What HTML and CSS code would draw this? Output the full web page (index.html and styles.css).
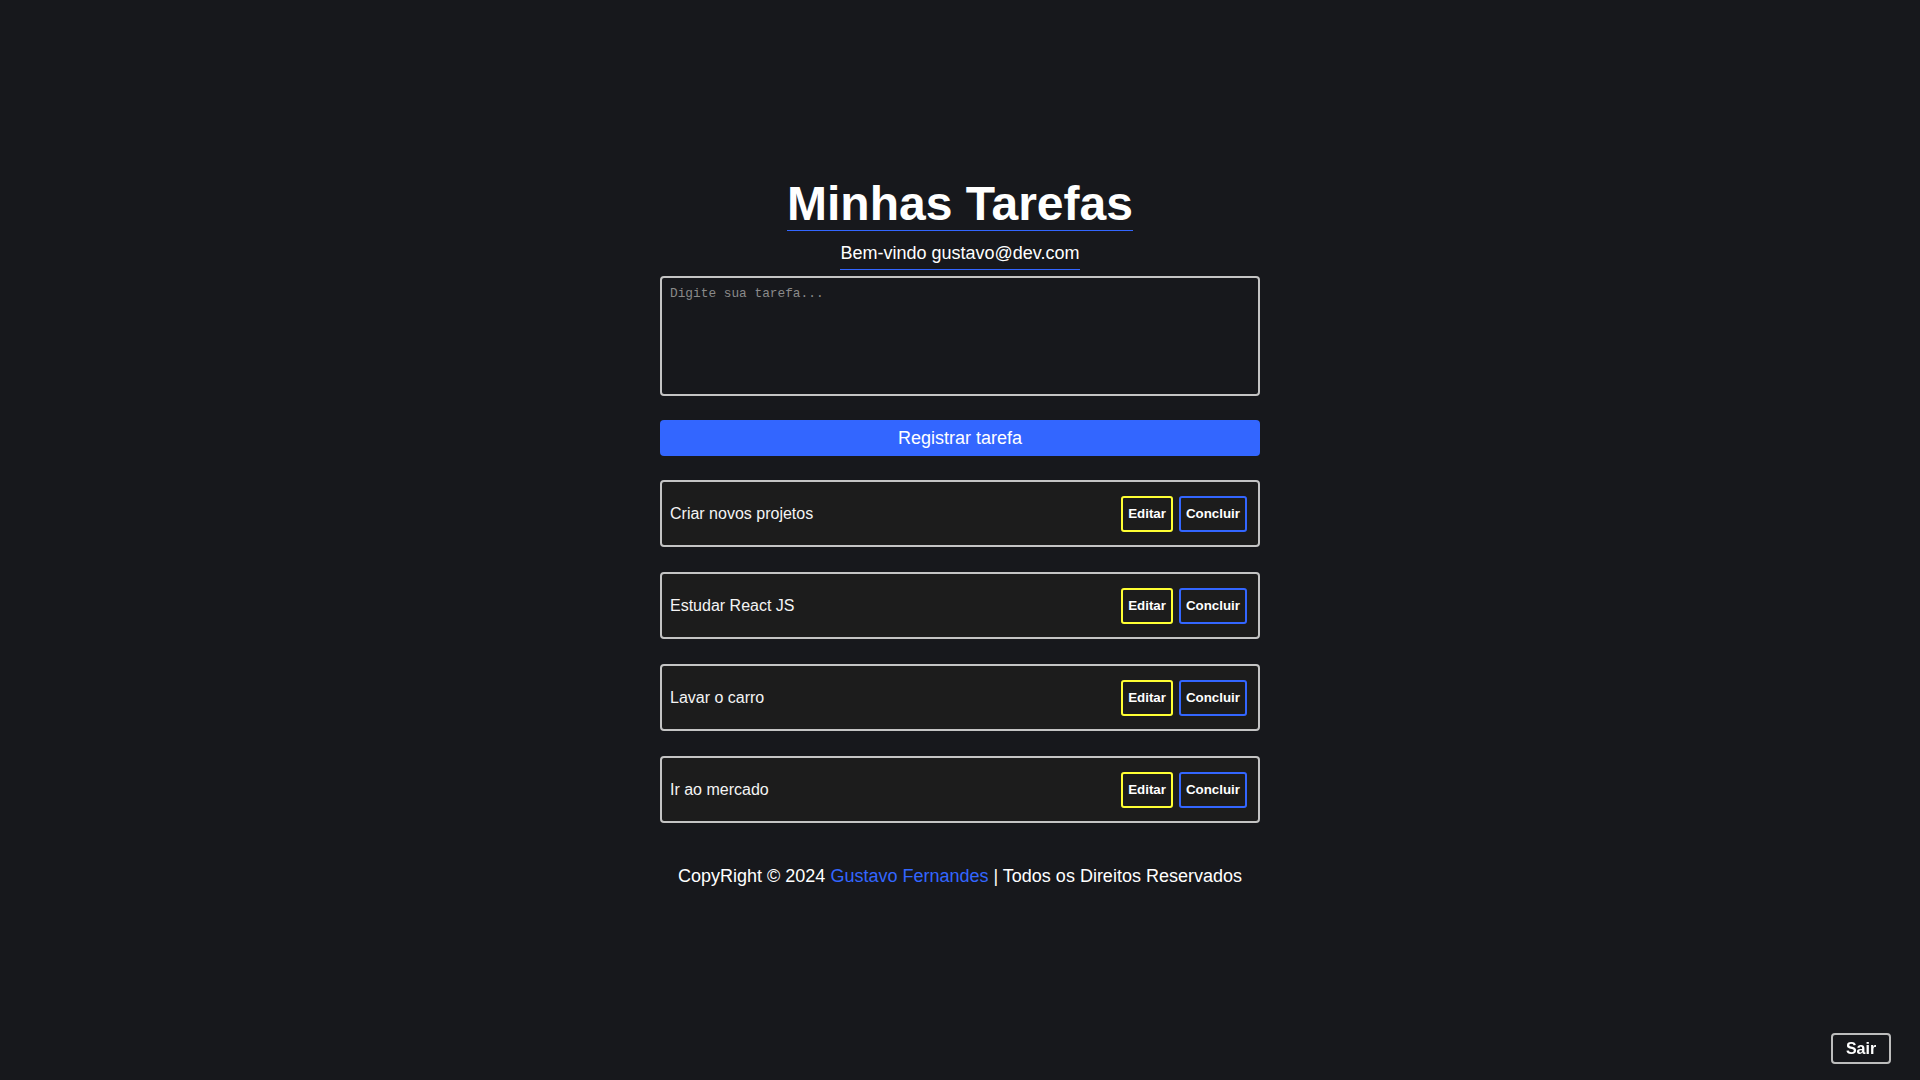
FILE: index.html
```html
<!DOCTYPE html>
<html lang="pt-BR">
<head>
<meta charset="utf-8">
<title>Minhas Tarefas</title>
<link rel="stylesheet" href="styles.css">
</head>
<body>
<main class="container">
  <h1 class="title">Minhas Tarefas</h1>
  <span class="welcome">Bem-vindo gustavo@dev.com</span>
  <form class="form">
    <textarea class="textarea" placeholder="Digite sua tarefa..."></textarea>
    <button type="button" class="btn-register">Registrar tarefa</button>
  </form>
  <ul class="list">
    <li class="task">
      <p class="task-text">Criar novos projetos</p>
      <div class="actions">
        <button type="button" class="btn-edit">Editar</button>
        <button type="button" class="btn-done">Concluir</button>
      </div>
    </li>
    <li class="task">
      <p class="task-text">Estudar React JS</p>
      <div class="actions">
        <button type="button" class="btn-edit">Editar</button>
        <button type="button" class="btn-done">Concluir</button>
      </div>
    </li>
    <li class="task">
      <p class="task-text">Lavar o carro</p>
      <div class="actions">
        <button type="button" class="btn-edit">Editar</button>
        <button type="button" class="btn-done">Concluir</button>
      </div>
    </li>
    <li class="task">
      <p class="task-text">Ir ao mercado</p>
      <div class="actions">
        <button type="button" class="btn-edit">Editar</button>
        <button type="button" class="btn-done">Concluir</button>
      </div>
    </li>
  </ul>
  <footer class="footer">CopyRight © 2024 <a class="footer-link" href="#">Gustavo Fernandes</a> | Todos os Direitos Reservados</footer>
</main>
<button type="button" class="btn-logout">Sair</button>
</body>
</html>
```

FILE: styles.css
```css
* { box-sizing: border-box; }

html, body {
  margin: 0;
  padding: 0;
  background: #17181c;
  color: #ffffff;
  font-family: "Liberation Sans", Arial, sans-serif;
  min-height: 100vh;
}

.container {
  width: 600px;
  margin: 0 auto;
  padding-top: 178px;
  display: flex;
  flex-direction: column;
  align-items: center;
}

.title {
  margin: 0;
  font-size: 48px;
  font-weight: 700;
  line-height: 52px;
  border-bottom: 1px solid #3366ff;
}

.welcome {
  margin-top: 12px;
  font-size: 18px;
  padding-bottom: 5px;
  border-bottom: 1px solid #3366ff;
}

.form {
  width: 100%;
  margin-top: 6px;
  display: flex;
  flex-direction: column;
}

.textarea {
  width: 100%;
  height: 120px;
  background: transparent;
  border: 2px solid #c4c4c4;
  border-radius: 4px;
  padding: 8px;
  color: #ffffff;
  font-family: "Liberation Mono", "DejaVu Sans Mono", monospace;
  font-size: 12.8px;
  resize: none;
  outline: none;
}

.textarea::placeholder {
  color: #8a8a8a;
}

.btn-register {
  margin-top: 24px;
  height: 36px;
  width: 100%;
  background: #3366ff;
  border: none;
  border-radius: 4px;
  color: #ffffff;
  font-family: "Liberation Sans", Arial, sans-serif;
  font-size: 18px;
}

.list {
  list-style: none;
  margin: 24px 0 0;
  padding: 0;
  width: 100%;
  display: flex;
  flex-direction: column;
  gap: 25px;
}

.task {
  height: 67px;
  display: flex;
  align-items: center;
  justify-content: space-between;
  padding: 0 11px 0 8px;
  background: #1c1c1c;
  border: 2px solid #c4c4c4;
  border-radius: 4px;
}

.task-text {
  margin: 0;
  font-size: 16px;
  color: #f4f4f4;
}

.actions {
  display: flex;
  gap: 6px;
}

.btn-edit,
.btn-done {
  height: 36px;
  padding: 0 5px;
  background: transparent;
  border-radius: 3px;
  color: #ffffff;
  font-family: "Liberation Sans", Arial, sans-serif;
  font-size: 13.33px;
  font-weight: 700;
}

.btn-edit {
  border: 2px solid #ffff33;
}

.btn-done {
  border: 2px solid #3366ff;
}

.footer {
  margin-top: 43px;
  font-size: 18px;
  white-space: nowrap;
}

.footer-link {
  color: #3366ff;
  text-decoration: none;
}

.btn-logout {
  position: fixed;
  right: 29px;
  bottom: 16px;
  width: 60px;
  height: 31px;
  background: transparent;
  border: 2px solid #bdbdbd;
  border-radius: 4px;
  color: #ffffff;
  font-family: "Liberation Sans", Arial, sans-serif;
  font-size: 16px;
  font-weight: 700;
}
```
